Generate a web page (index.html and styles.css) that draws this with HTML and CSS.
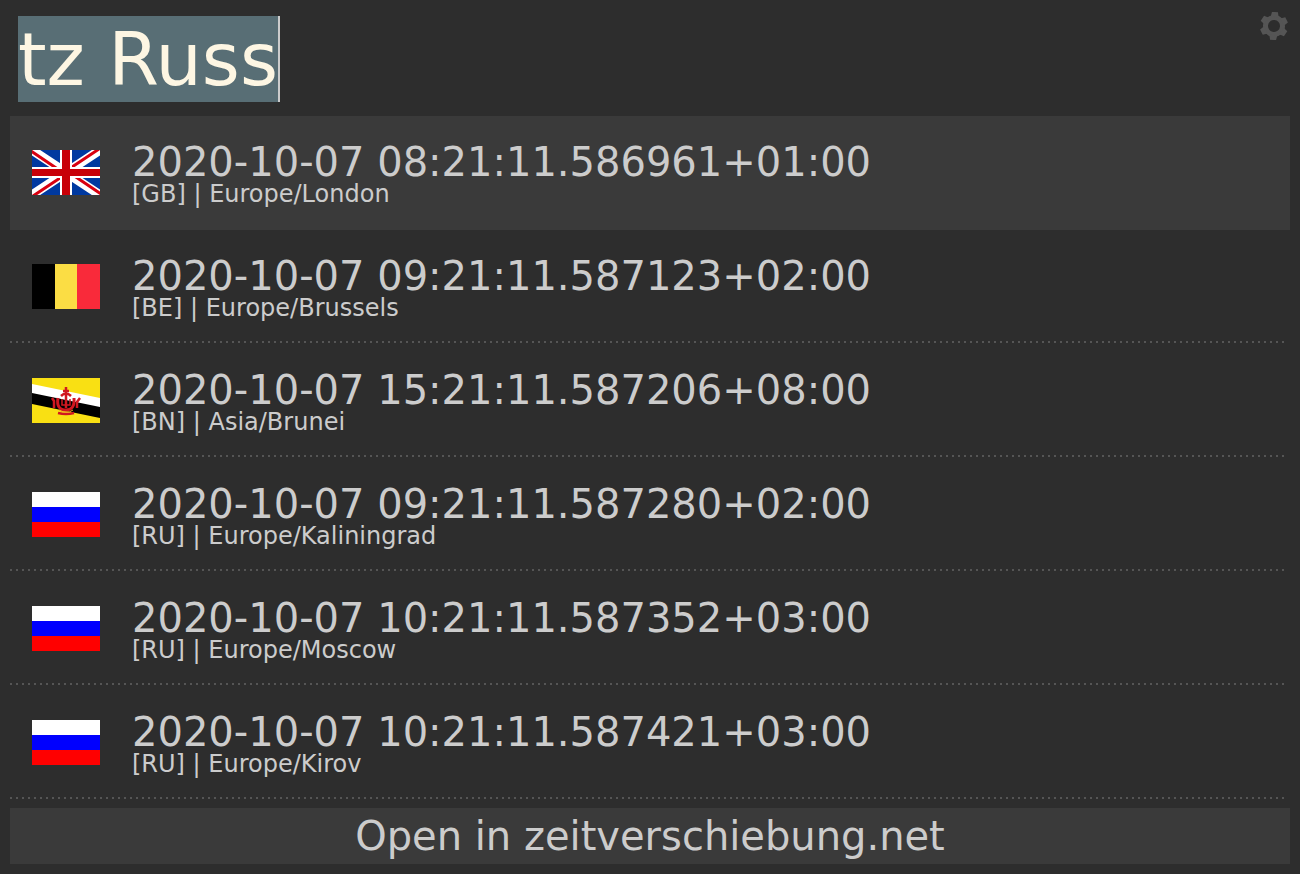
FILE: index.html
```html
<!DOCTYPE html>
<html lang="en">
<head>
<meta charset="utf-8">
<meta name="viewport" content="width=device-width, initial-scale=1">
<title>Time zones</title>
<link rel="stylesheet" href="styles.css">
</head>
<body>
<svg class="symbols" aria-hidden="true">
  <symbol id="ru" viewBox="0 0 68 45" preserveAspectRatio="none">
    <path fill="#fff" d="M0 0h68v15H0z"/><path fill="#00f" d="M0 15h68v15H0z"/><path fill="#f00" d="M0 30h68v15H0z"/>
  </symbol>
</svg>
<main class="launcher">
  <header class="bar">
    <input class="query" type="text" value="tz Russ" aria-label="Query" spellcheck="false" autocomplete="off">
    <button class="settings" type="button" aria-label="Settings">
      <svg viewBox="-14 -14 28 28" width="28" height="28" fill="#555">
        <g transform="rotate(4)">
          <circle r="8.500" fill="none" stroke="#555" stroke-width="5"/>
          <path id="teeth" d="M-4-9L-3-14H3L4-9ZM-4 9L-3 14H3L4 9Z"/>
          <use href="#teeth" transform="rotate(60)"/>
          <use href="#teeth" transform="rotate(120)"/>
        </g>
      </svg>
    </button>
  </header>
  <ul class="results">
    <li class="result selected">
      <div class="row">
        <svg class="flag" viewBox="0 0 68 45" role="img" aria-label="United Kingdom">
          <path fill="#0039a0" d="M0 0h68v45H0z"/>
          <path stroke="#fff" stroke-width="9" d="M0 0L68 45M68 0L0 45"/>
          <path stroke="#d80010" stroke-width="3" d="M-1 1L33 24M69 44L35 21M67-1L34 21M1 46L34 24"/>
          <path stroke="#fff" stroke-width="12" d="M34 0V45"/><path stroke="#fff" stroke-width="11" d="M0 22.500H68"/>
          <path stroke="#c80008" stroke-width="8" d="M34 0V45"/><path stroke="#c80008" stroke-width="7" d="M0 22.500H68"/>
        </svg>
        <div class="text"><div class="time">2020-10-07 08:21:11.586961+01:00</div><div class="zone">[GB] | Europe/London</div></div>
      </div>
    </li>
    <li class="result">
      <div class="row">
        <svg class="flag" viewBox="0 0 68 45" role="img" aria-label="Belgium">
          <path d="M0 0h23v45H0z"/><path fill="#fbdd44" d="M23 0h22v45H23z"/><path fill="#f92a3a" d="M45 0h23v45H45z"/>
        </svg>
        <div class="text"><div class="time">2020-10-07 09:21:11.587123+02:00</div><div class="zone">[BE] | Europe/Brussels</div></div>
      </div>
    </li>
    <li class="result">
      <div class="row">
        <svg class="flag" viewBox="0 0 68 45" role="img" aria-label="Brunei">
          <path fill="#f9e013" d="M0 0h68v45H0z"/>
          <path fill="#fff" d="M0 6L68 20V31L0 17z"/><path d="M0 15L68 29V40L0 26z"/>
          <g fill="none" stroke="#d01720">
            <path stroke-width="3" d="M26 20Q24 32 34 32Q43 32 42 20"/>
            <path stroke-width="2.500" d="M34 9V30M31 13H37M29 18Q34 13 39 18M26 35Q34 37 42 35M20 20L22 23V30M48 20L45 24V30"/>
            <path stroke-width="1.500" d="M30 21V27H38V21"/>
          </g>
          <path fill="none" stroke="#f0a020" d="M27 32Q34 37 41 32"/>
        </svg>
        <div class="text"><div class="time">2020-10-07 15:21:11.587206+08:00</div><div class="zone">[BN] | Asia/Brunei</div></div>
      </div>
    </li>
    <li class="result">
      <div class="row">
        <svg class="flag" role="img" aria-label="Russia"><use href="#ru"/></svg>
        <div class="text"><div class="time">2020-10-07 09:21:11.587280+02:00</div><div class="zone">[RU] | Europe/Kaliningrad</div></div>
      </div>
    </li>
    <li class="result">
      <div class="row">
        <svg class="flag" role="img" aria-label="Russia"><use href="#ru"/></svg>
        <div class="text"><div class="time">2020-10-07 10:21:11.587352+03:00</div><div class="zone">[RU] | Europe/Moscow</div></div>
      </div>
    </li>
    <li class="result">
      <div class="row">
        <svg class="flag" role="img" aria-label="Russia"><use href="#ru"/></svg>
        <div class="text"><div class="time">2020-10-07 10:21:11.587421+03:00</div><div class="zone">[RU] | Europe/Kirov</div></div>
      </div>
    </li>
  </ul>
  <button class="open" type="button">Open in zeitverschiebung.net</button>
</main>
</body>
</html>
```
FILE: styles.css
```css
* {
  box-sizing: border-box;
}

body {
  margin: 0;
  background: #2d2d2d;
  color: #ccc;
  font-family: "DejaVu Sans", sans-serif;
}

button {
  border: 0;
  color: inherit;
  font: inherit;
}

.symbols {
  display: none;
}

.launcher {
  display: flex;
  flex-direction: column;
  gap: 8px;
  padding: 10px;
}

.bar {
  display: flex;
  justify-content: space-between;
  align-items: flex-start;
  padding: 6px 0 6px 8px;
  margin-right: -8px;
}

.query {
  field-sizing: content;
  height: 86px;
  padding: 0;
  border: 0;
  border-right: 2px solid #ccc;
  outline: 0;
  background: #586e75;
  color: #fdf6e3;
  font: 73px "DejaVu Sans", sans-serif;
}

.settings {
  display: flex;
  margin: -4px 10px 0 0;
  padding: 0;
  background: none;
}

.results {
  margin: 0;
  padding: 0;
  list-style: none;
}

.result {
  padding-bottom: 1px;
}

.result::after {
  content: "";
  display: block;
  height: 2px;
  margin-right: 6px;
  background: repeating-linear-gradient(to right, #555 0 2px, transparent 2px 6px);
}

.selected {
  background: #3a3a3a;
}

.selected::after {
  background: none;
}

.row {
  display: flex;
  align-items: flex-start;
  gap: 32px;
  padding: 27px 22px 20px;
}

.flag {
  flex: none;
  width: 68px;
  height: 45px;
  margin-top: 7px;
}

.time {
  font-size: 40px;
  line-height: 38px;
}

.zone {
  font-size: 24px;
  line-height: 26px;
}

.open {
  padding: 4px;
  background: #3a3a3a;
  font-size: 40px;
  line-height: 48px;
}
```
